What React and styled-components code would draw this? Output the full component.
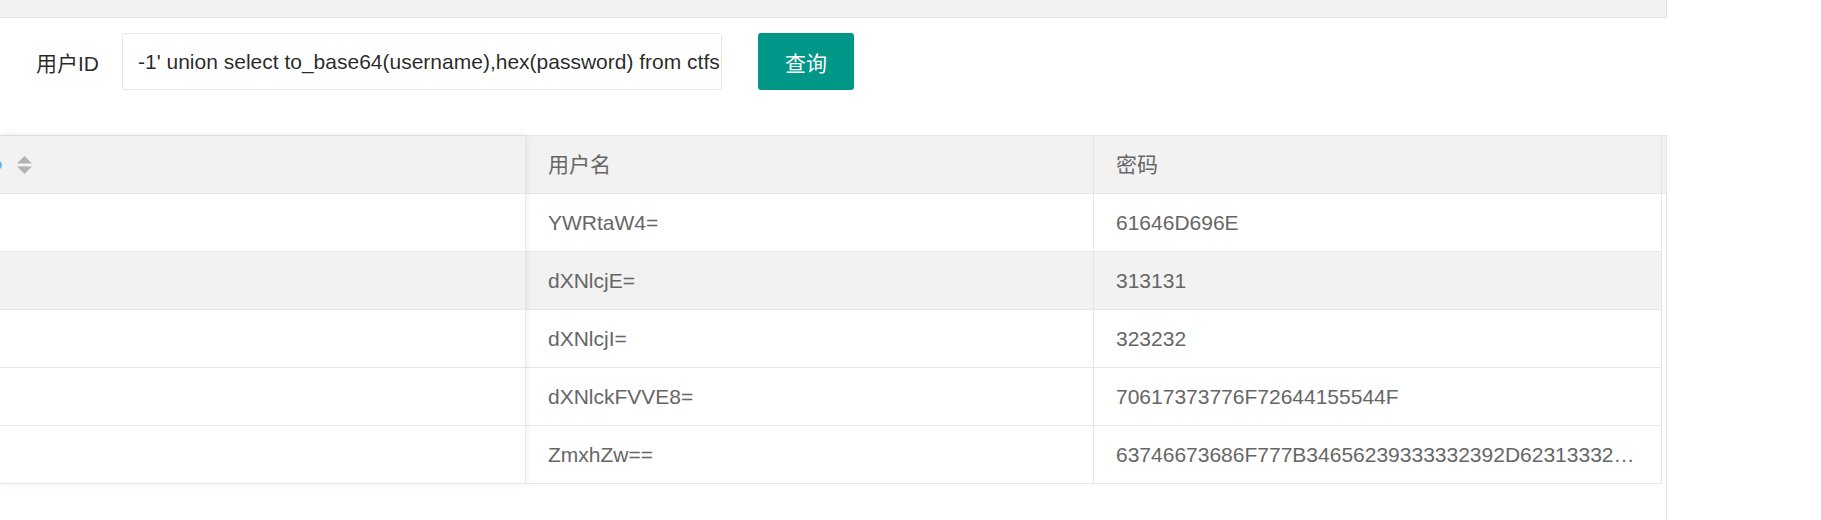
import React from "react";
import styled, { createGlobalStyle } from "styled-components";

const Global = createGlobalStyle`
  html, body { margin: 0; padding: 0; background: #fff; overflow: hidden; }
  body { font-family: "Liberation Sans", Arial, "Noto Sans CJK SC", sans-serif; }
  * { box-sizing: border-box; }
`;

const Page = styled.div`
  width: 1667px;
  height: 520px;
  display: flex;
  flex-direction: column;
`;

const TopBar = styled.div`
  height: 18px;
  flex: none;
  background: #f2f2f2;
  border-bottom: 1px solid #e2e2e2;
  border-right: 1px solid #e2e2e2;
`;

const SearchForm = styled.form`
  display: flex;
  align-items: center;
  height: 57px;
  flex: none;
  margin: 15px 0 45px;
`;

const Label = styled.label`
  width: 122px;
  padding-right: 23px;
  text-align: right;
  font-size: 21px;
  color: rgba(0, 0, 0, 0.85);
`;

const Input = styled.input`
  width: 600px;
  height: 57px;
  padding: 0 0 0 15px;
  border: 1px solid #e6e6e6;
  border-radius: 3px;
  font: 21px "Liberation Sans", Arial, sans-serif;
  color: rgba(0, 0, 0, 0.85);
  background: #fff;
  outline: none;
`;

const Button = styled.button`
  margin-left: 36px;
  width: 96px;
  height: 57px;
  padding: 0;
  background: #009688;
  color: #fff;
  border: none;
  border-radius: 3px;
  font: 21px "Liberation Sans", "Noto Sans CJK SC", sans-serif;
`;

const TableView = styled.div`
  flex: 1;
  display: flex;
  align-items: flex-start;
  border-top: 1px solid #e6e6e6;
  border-right: 1px solid #e6e6e6;
`;

const FixedCol = styled.div`
  width: 526px;
  flex: none;
  position: relative;
  z-index: 1;
  background: #fff;
  box-shadow: 0 -1px 8px rgba(0, 0, 0, 0.08);
`;

const FixedCell = styled.div`
  height: 58px;
  display: flex;
  align-items: center;
  border-bottom: 1px solid #e6e6e6;
  border-right: 1px solid #e6e6e6;
  background: ${(p) => (p.$shade ? "#f2f2f2" : "#fff")};
`;

const TipDot = styled.span`
  width: 10px;
  height: 10px;
  margin-left: -8px;
  border-radius: 50%;
  background: #62b5f0;
`;

const SortIcon = styled.svg`
  margin-left: 15px;
  display: block;
`;

const Main = styled.div`
  flex: 1;
  display: flex;
  flex-direction: column;
`;

const HeadRow = styled.div`
  display: flex;
  height: 58px;
  background: #f2f2f2;
  border-bottom: 1px solid #e6e6e6;
`;

const Row = styled.div`
  display: flex;
  width: 1136px;
  height: 58px;
  border-bottom: 1px solid #e6e6e6;
  background: ${(p) => (p.$hover ? "#f2f2f2" : "#fff")};
`;

const Cell = styled.div`
  width: 568px;
  flex: none;
  padding: 0 22px;
  line-height: 57px;
  font-size: 21px;
  color: #666;
  border-right: 1px solid #e6e6e6;
  white-space: nowrap;
  overflow: hidden;
  text-overflow: ellipsis;
`;

const rows = [
  { user: "YWRtaW4=", pass: "61646D696E" },
  { user: "dXNlcjE=", pass: "313131" },
  { user: "dXNlcjI=", pass: "323232" },
  { user: "dXNlckFVVE8=", pass: "70617373776F72644155544F" },
  {
    user: "ZmxhZw==",
    pass: "63746673686F777B34656239333332392D623133322D343739382D396131652D3734613861623762643761317D",
  },
];

export default function App() {
  return (
    <>
      <Global />
      <Page>
        <TopBar />
        <SearchForm onSubmit={(e) => e.preventDefault()}>
          <Label>用户ID</Label>
          <Input
            readOnly
            value="-1' union select to_base64(username),hex(password) from ctfshow_user4 --+"
          />
          <Button type="button">查询</Button>
        </SearchForm>
        <TableView>
          <FixedCol>
            <FixedCell $shade>
              <TipDot />
              <SortIcon width="15" height="18" viewBox="0 0 15 18">
                <polygon points="0,7.5 7.5,0 15,7.5" fill="#b2b2b2" />
                <polygon points="0,10.5 15,10.5 7.5,18" fill="#b2b2b2" />
              </SortIcon>
            </FixedCell>
            {rows.map((r, i) => (
              <FixedCell key={i} $shade={i === 1} />
            ))}
          </FixedCol>
          <Main>
            <HeadRow>
              <Cell>用户名</Cell>
              <Cell>密码</Cell>
            </HeadRow>
            {rows.map((r, i) => (
              <Row key={i} $hover={i === 1}>
                <Cell>{r.user}</Cell>
                <Cell>{r.pass}</Cell>
              </Row>
            ))}
          </Main>
        </TableView>
      </Page>
    </>
  );
}
